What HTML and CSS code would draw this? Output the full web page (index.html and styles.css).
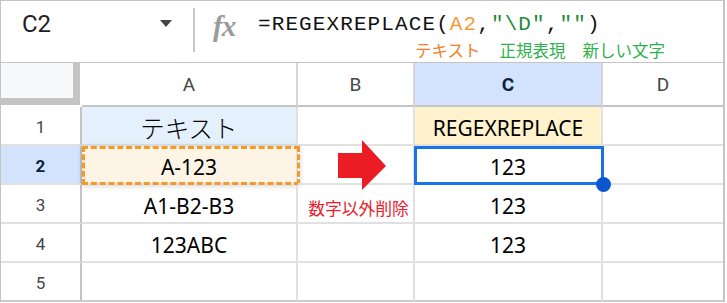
FILE: index.html
```html
<!DOCTYPE html>
<html lang="ja">
<head>
<meta charset="utf-8">
<title>REGEXREPLACE</title>
<link rel="stylesheet" href="styles.css">
</head>
<body>
<div class="sheet">
  <div class="fbar">
    <div class="namebox"><span class="ref">C2</span><span class="caret"></span></div>
    <div class="sep"></div>
    <div class="fx">fx</div>
    <div class="formula">
      <div class="expr">=REGEXREPLACE(<span class="arg">A2</span>,<span class="str">"\D"</span>,<span class="str">""</span>)</div>
      <div class="notes"><span class="n-text">テキスト</span><span class="n-re">正規表現</span><span class="n-new">新しい文字</span></div>
    </div>
  </div>

  <div class="grid">
    <div class="corner"><div class="freeze"></div></div>
    <div class="colhead">A</div>
    <div class="colhead">B</div>
    <div class="colhead active">C</div>
    <div class="colhead end">D</div>

    <div class="rowhead">1</div>
    <div class="cell jp src">テキスト</div>
    <div class="cell"></div>
    <div class="cell fn">REGEXREPLACE</div>
    <div class="cell end"></div>

    <div class="rowhead active">2</div>
    <div class="cell copy">A-123<div class="marching"></div></div>
    <div class="cell arrow-cell">
      <svg class="arrow" width="48" height="50" viewBox="0 0 48 50">
        <path d="M0 13 H24 V0 L48 26 L24 50 V38 H0 Z" fill="#ec1c24"/>
      </svg>
    </div>
    <div class="cell picked">123<div class="cursor"><span class="handle"></span></div></div>
    <div class="cell end"></div>

    <div class="rowhead">3</div>
    <div class="cell">A1-B2-B3</div>
    <div class="cell note">数字以外削除</div>
    <div class="cell">123</div>
    <div class="cell end"></div>

    <div class="rowhead">4</div>
    <div class="cell">123ABC</div>
    <div class="cell"></div>
    <div class="cell">123</div>
    <div class="cell end"></div>

    <div class="rowhead last">5</div>
    <div class="cell last"></div>
    <div class="cell last"></div>
    <div class="cell last"></div>
    <div class="cell last end"></div>
  </div>
</div>
</body>
</html>
```

FILE: styles.css
```css
body {
    margin: 0;
    background: #fff;
    font-family: Roboto, "Noto Sans", sans-serif;
}

.sheet {
    width: 725px;
    box-sizing: border-box;
    border-top: 1px solid #c4c4c4;
    border-left: 1px solid #c4c4c4;
    border-right: 2px solid #c4c4c4;
}

/* formula bar */
.fbar {
    height: 62px;
    box-sizing: border-box;
    border-bottom: 1px solid #c4c4c4;
    display: flex;
    align-items: flex-start;
}
.namebox {
    width: 192px;
    height: 46px;
    box-sizing: border-box;
    padding-left: 21px;
    padding-right: 21px;
    display: flex;
    align-items: center;
    justify-content: space-between;
}
.ref {
    font-size: 24px;
    color: #1f1f1f;
}
.caret {
    width: 0;
    height: 0;
    border-left: 6.5px solid transparent;
    border-right: 6.5px solid transparent;
    border-top: 7px solid #444;
    margin-top: -2px;
}
.sep {
    width: 2px;
    height: 44px;
    margin-top: 7px;
    background: #c8c8c8;
}
.fx {
    margin-left: 18px;
    margin-top: 9px;
    width: 45px;
    font-family: "Liberation Serif", serif;
    font-style: italic;
    font-weight: bold;
    font-size: 29px;
    color: #9a9a9a;
    letter-spacing: -1px;
}
.formula {
    padding-top: 12px;
}
.expr {
    font-family: "Liberation Mono", monospace;
    font-size: 21px;
    line-height: 24px;
    letter-spacing: 1.1px;
    color: #111;
}
.arg { color: #f59a3c; }
.str { color: #1e8a3a; }
.notes {
    margin-top: 3px;
    margin-left: 157px;
    font-family: "Noto Sans CJK JP", sans-serif;
    font-size: 16.5px;
    line-height: 20px;
    white-space: nowrap;
}
.n-text { color: #f57f2a; margin-right: 19px; }
.n-re { color: #2fb14c; margin-right: 17px; }
.n-new { color: #2fb14c; }

/* grid */
.grid {
    display: grid;
    grid-template-columns: 81px 216px 117px 188px 120px;
    grid-template-rows: 44px 39px 39px 39px 39px 39px;
}
.grid > div {
    box-sizing: border-box;
}
.corner {
    background: #fff;
}
.freeze {
    width: 79px;
    height: 42px;
    box-sizing: border-box;
    background: #f8f9fa;
    border-right: 7px solid #c4c4c4;
    border-bottom: 7px solid #c4c4c4;
}
.colhead {
    border-right: 2px solid #d6d6d6;
    border-bottom: 2px solid #c4c4c4;
    display: flex;
    align-items: center;
    justify-content: center;
    font-size: 19px;
    color: #444746;
}
.colhead.active {
    background: #d3e3fd;
    color: #0b1f44;
    font-weight: bold;
}
.rowhead {
    border-right: 2px solid #c4c4c4;
    border-bottom: 2px solid #e1e1e1;
    display: flex;
    align-items: center;
    justify-content: center;
    padding-top: 2px;
    font-size: 17px;
    color: #444746;
}
.rowhead.active {
    background: #d3e3fd;
    color: #0b1f44;
    font-weight: bold;
}
.cell {
    position: relative;
    border-right: 2px solid #e1e1e1;
    border-bottom: 2px solid #e1e1e1;
    display: flex;
    align-items: center;
    justify-content: center;
    padding-top: 4px;
    font-family: "Noto Sans", sans-serif;
    font-size: 21px;
    color: #000;
}
.end { border-right: none; }
.last { border-bottom: 2px solid #cccccc; }

.jp {
    font-family: "Noto Sans CJK JP", sans-serif;
    font-weight: 300;
    font-size: 24.5px;
}
.src { background: #e4f0fc; }
.fn { background: #fff2cc; }
.copy { background: #fdf4e6; }

.note {
    font-family: "Noto Sans CJK JP", sans-serif;
    font-size: 16.8px;
    color: #e8202a;
    padding-top: 8px;
    padding-left: 6px;
}

/* overlays */
.marching {
    position: absolute;
    left: 0;
    top: 0;
    right: -4px;
    bottom: -2px;
    border: 3px dashed #f29b2a;
    box-shadow: 0 1px 5px rgba(0, 0, 0, 0.18);
}
.arrow {
    position: absolute;
    left: 40px;
    top: -6px;
    z-index: 2;
}
.cursor {
    position: absolute;
    left: -1px;
    top: 0;
    right: -3px;
    bottom: -2px;
    border: 3px solid #1a73e8;
    z-index: 2;
}
.handle {
    position: absolute;
    right: -10px;
    bottom: -10px;
    width: 15px;
    height: 15px;
    border-radius: 50%;
    background: #0b57d0;
}
```
